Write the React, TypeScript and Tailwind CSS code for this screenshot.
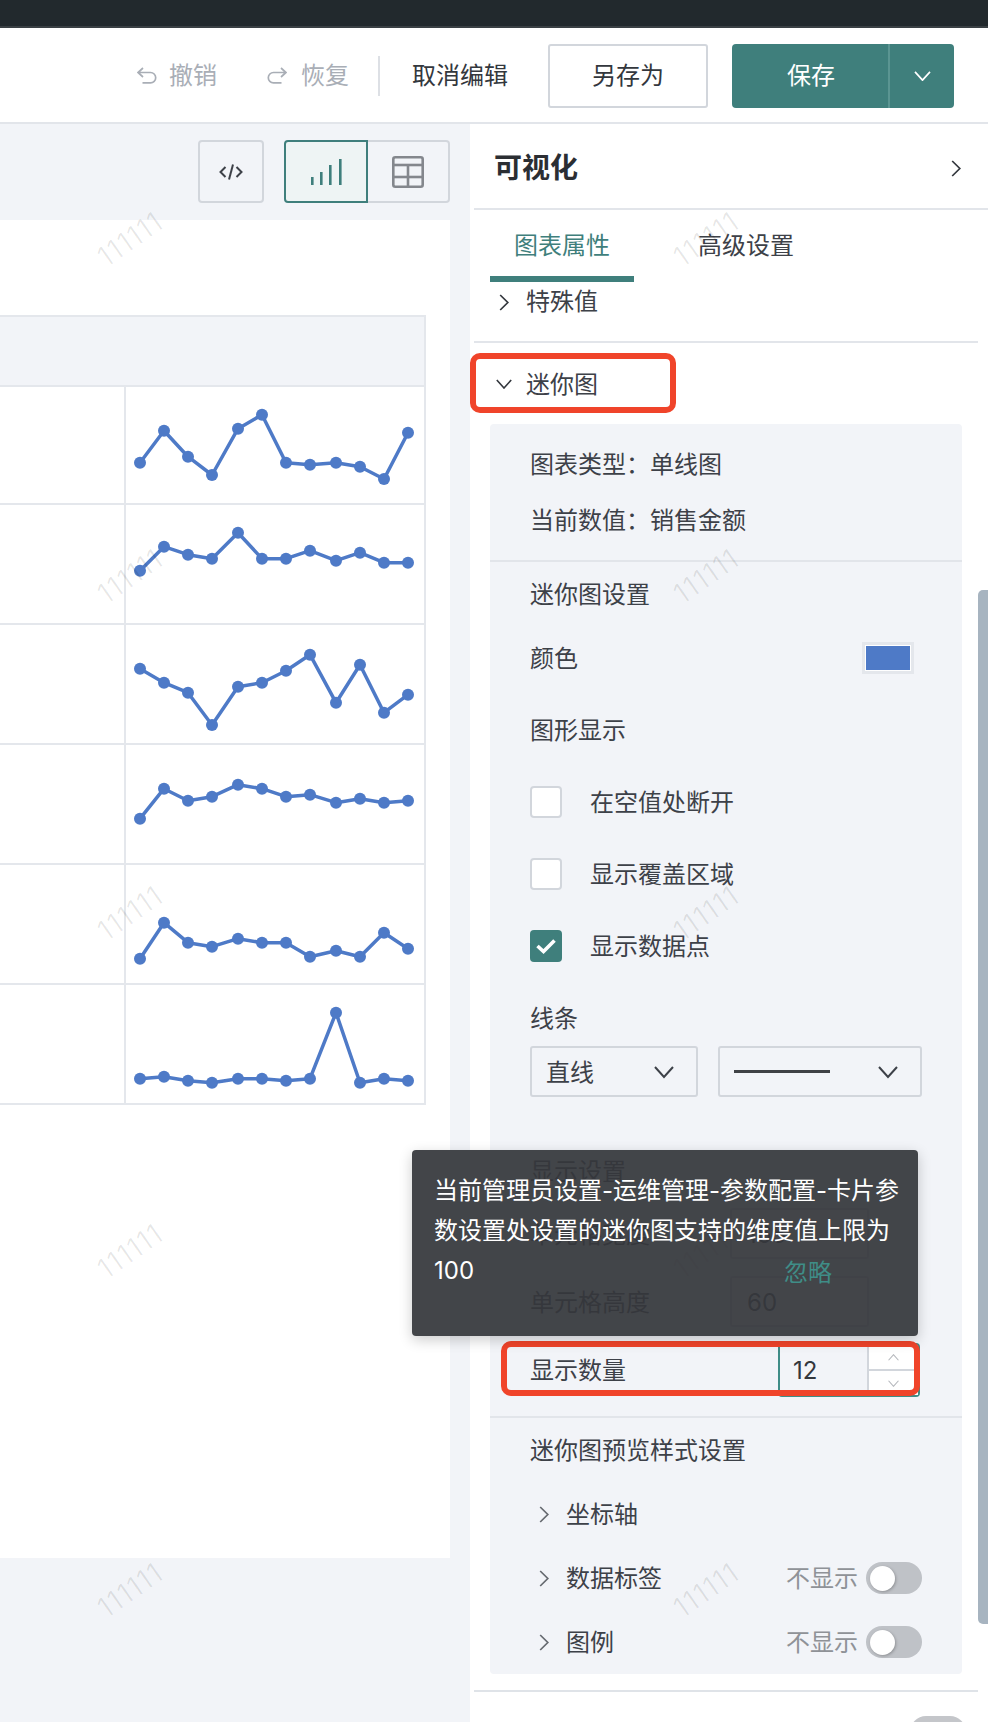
import React from "react";

const XS = [140, 164, 188, 212, 238, 262, 286, 310, 336, 360, 384, 408];
const SPARKS: { top: number; h: number; ys: number[] }[] = [
  { top: 387, h: 116, ys: [462.7, 430.7, 456.7, 475, 428.7, 414.7, 462.7, 464.7, 462.7, 466.7, 479, 432.7] },
  { top: 505, h: 118, ys: [570.7, 546.7, 554.7, 558.7, 532.7, 558.7, 558.7, 550.7, 560.7, 552.7, 562.7, 562.7] },
  { top: 625, h: 118, ys: [668.7, 682.7, 692.7, 725, 686.7, 682.7, 670.7, 654.7, 702.7, 664.7, 712.7, 694.7] },
  { top: 745, h: 118, ys: [818.7, 788.7, 800.7, 796.7, 784.7, 788.7, 796.7, 794.7, 802.7, 798.7, 802.7, 800.7] },
  { top: 865, h: 118, ys: [958.7, 922.7, 942.7, 946.7, 938.7, 942.7, 942.7, 956.7, 950.7, 956.7, 932.7, 948.7] },
  { top: 985, h: 118, ys: [1078.7, 1076.7, 1080.7, 1082.7, 1078.7, 1078.7, 1080.7, 1078.7, 1012.7, 1082.7, 1078.7, 1080.7] },
];

const WATERMARKS = [
  [130, 239], [130, 576], [130, 913], [130, 1251], [130, 1590],
  [706, 239], [706, 576], [706, 913], [706, 1251], [706, 1590],
];

function Right({ className }: { className: string }) {
  return (
    <svg viewBox="0 0 10 17" fill="none" stroke="currentColor" strokeWidth="1.7" className={className}>
      <polyline points="1.2,1 8.8,8.5 1.2,16" />
    </svg>
  );
}

function Down({ className }: { className: string }) {
  return (
    <svg viewBox="0 0 20 12" fill="none" stroke="currentColor" strokeWidth="2" className={className}>
      <polyline points="1,1 10,11 19,1" />
    </svg>
  );
}

function Spark({ top, h, ys }: { top: number; h: number; ys: number[] }) {
  const pts = XS.map((x, i) => [x - 126, ys[i] - top]);
  return (
    <svg width="298" height={h} viewBox={`0 0 298 ${h}`} className="block overflow-visible">
      <polyline points={pts.map((p) => p.join(",")).join(" ")} fill="none" stroke="#4e7ac7" strokeWidth="3.5" strokeLinejoin="round" />
      {pts.map((p, i) => (
        <circle key={i} cx={p[0]} cy={p[1]} r="6" fill="#4e7ac7" />
      ))}
    </svg>
  );
}

function Toggle() {
  return (
    <div className="flex h-[32px] w-[56px] items-center rounded-full bg-[#bfc2c7] pl-[4px]">
      <div className="h-[25px] w-[25px] rounded-full bg-white shadow-[1px_1px_3px_rgba(0,0,0,0.25)]" />
    </div>
  );
}

function Check({ checked, label }: { checked?: boolean; label: string }) {
  return (
    <div className="flex h-[72px] items-center pl-[40px]">
      {checked ? (
        <div className="flex h-[32px] w-[32px] items-center justify-center rounded-[4px] bg-[#3f7f7c]">
          <svg viewBox="0 0 20 16" className="h-[16px] w-[20px]" fill="none" stroke="#fff" strokeWidth="3.6">
            <polyline points="1.5,8 7.5,13.5 18.5,2.5" />
          </svg>
        </div>
      ) : (
        <div className="h-[32px] w-[32px] rounded-[4px] border-2 border-[#d2d6dc] bg-white" />
      )}
      <span className="ml-[28px] mt-[2px]">{label}</span>
    </div>
  );
}

function Input({ value }: { value: string }) {
  return (
    <div className="flex h-[51px] w-[139px] items-center rounded-[3px] border-2 border-[#d2d6dc] bg-white pl-[15px] text-[#3d4148]">
      <span className="mt-[2px]">{value}</span>
    </div>
  );
}

export default function App() {
  return (
    <div className="relative flex h-[1722px] w-[988px] flex-col overflow-hidden bg-white font-['Inter','Noto_Sans_CJK_SC',sans-serif] text-[24px] leading-[32px] text-[#3d4148]">
      {/* top dark bar */}
      <div className="h-[28px] shrink-0 border-b-2 border-[#3a4044] bg-[#22292d]" />

      {/* header */}
      <div className="flex h-[96px] shrink-0 items-start justify-end border-b-2 border-[#e2e5ea] pr-[34px] pt-[16px]">
        <div className="flex h-[64px] items-center text-[#a9aeb6]">
          <svg viewBox="0 0 20 18" className="h-[18px] w-[20px]" fill="none" stroke="currentColor" strokeWidth="1.7">
            <path d="M6 1 L1 5.5 L6 10 M1 5.5 H13.5 a5.2 5.2 0 0 1 0 10.4 H5.5" />
          </svg>
          <span className="ml-[12px]">撤销</span>
          <svg viewBox="0 0 20 18" className="ml-[50px] h-[18px] w-[20px]" fill="none" stroke="currentColor" strokeWidth="1.7">
            <path d="M14 1 L19 5.5 L14 10 M19 5.5 H6.5 a5.2 5.2 0 0 0 0 10.4 H14.5" />
          </svg>
          <span className="ml-[14px]">恢复</span>
          <div className="ml-[29px] h-[40px] w-[2px] bg-[#dde0e5]" />
        </div>
        <div className="ml-[32px] flex h-[64px] items-center text-[#33373d]">取消编辑</div>
        <div className="ml-[40px] flex h-[64px] w-[160px] items-center justify-center rounded-[3px] border-2 border-[#d2d6dc] text-[#33373d]">
          另存为
        </div>
        <div className="ml-[24px] flex h-[64px] w-[222px] overflow-hidden rounded-[4px] bg-[#3f7f7c] text-white">
          <div className="flex w-[158px] items-center justify-center border-r-2 border-[#5b9592] pl-[2px]">保存</div>
          <div className="flex flex-1 items-center justify-center">
            <Down className="h-[10px] w-[17px]" />
          </div>
        </div>
      </div>

      {/* body */}
      <div className="flex min-h-0 flex-1">
        {/* left */}
        <div className="flex w-[470px] shrink-0 flex-col bg-[#f2f4f8]">
          <div className="flex h-[96px] shrink-0 justify-end pr-[20px] pt-[16px]">
            <div className="flex h-[63px] w-[66px] items-center justify-center rounded-[4px] border-2 border-[#d2d6dc]">
              <svg viewBox="0 0 24 16" className="h-[16px] w-[24px]" fill="none" stroke="#3d4148" strokeWidth="2">
                <polyline points="6.5,3 1.5,8 6.5,13" />
                <polyline points="17.5,3 22.5,8 17.5,13" />
                <line x1="14" y1="0.5" x2="10" y2="15.5" />
              </svg>
            </div>
            <div className="ml-[20px] flex h-[63px] w-[84px] items-center justify-center rounded-l-[4px] border-2 border-[#3f7f7c] bg-[#eef4f4]">
              <svg viewBox="0 0 31 26" className="h-[26px] w-[31px]" fill="#3f7f7c">
                <rect x="0" y="18" width="2.6" height="8" />
                <rect x="9" y="13" width="2.6" height="13" />
                <rect x="18" y="6" width="2.6" height="20" />
                <rect x="28" y="0" width="2.6" height="26" />
              </svg>
            </div>
            <div className="flex h-[63px] w-[82px] items-center justify-center rounded-r-[4px] border-y-2 border-r-2 border-[#d2d6dc]">
              <svg viewBox="0 0 32 32" className="h-[32px] w-[32px]" fill="none" stroke="#84878d" strokeWidth="2.6">
                <rect x="1.3" y="1.3" width="29.4" height="29.4" rx="2" />
                <line x1="1" y1="9" x2="31" y2="9" />
                <line x1="1" y1="21" x2="31" y2="21" />
                <line x1="16" y1="9" x2="16" y2="31" />
              </svg>
            </div>
          </div>
          <div className="mr-[20px] h-[1338px] shrink-0 bg-white pt-[95px]">
            <div className="w-[426px] border-t-2 border-r-2 border-[#e4e7ec]">
              <div className="h-[70px] border-b-2 border-[#e4e7ec] bg-[#f2f4f8]" />
              {SPARKS.map((s, i) => (
                <div key={i} className="flex border-b-2 border-[#e4e7ec]">
                  <div className="w-[124px] shrink-0 border-r-2 border-[#e4e7ec] box-content" />
                  <Spark top={s.top} h={s.h} ys={s.ys} />
                </div>
              ))}
            </div>
          </div>
        </div>

        {/* right panel */}
        <div className="relative flex min-w-0 flex-1 flex-col">
          <div className="ml-[4px] flex h-[86px] shrink-0 items-center justify-between border-b-2 border-[#e2e5ea] pl-[20px] pr-[27px] pt-[4px]">
            <span className="text-[28px] font-bold text-[#2b2e33]">可视化</span>
            <Right className="h-[17px] w-[10px] text-[#33373d]" />
          </div>
          <div className="ml-[20px] flex h-[72px] shrink-0 gap-[40px]">
            <div className="flex w-[144px] items-center justify-center border-b-[6px] border-[#3f7f7c] pt-[6px] text-[#3f7f7c]">图表属性</div>
            <div className="flex w-[144px] items-center justify-center border-b-[6px] border-transparent pt-[6px]">高级设置</div>
          </div>
          <div className="flex h-[40px] shrink-0 items-center pl-[29px]">
            <Right className="h-[17px] w-[10px] text-[#33373d]" />
            <span className="ml-[17px]">特殊值</span>
          </div>
          <div className="ml-[4px] mt-[19px] h-[2px] w-[504px] shrink-0 bg-[#e2e5ea]" />
          <div className="flex h-[81px] shrink-0 items-center pl-[26px]">
            <Down className="h-[10px] w-[16px] text-[#33373d]" />
            <span className="ml-[14px] mt-[2px]">迷你图</span>
          </div>

          {/* card */}
          <div className="ml-[20px] w-[472px] shrink-0 rounded-[4px] bg-[#f2f4f8]">
            <div className="pt-[12px]">
              <div className="flex h-[56px] items-center pl-[40px] pt-[2px]">图表类型：单线图</div>
              <div className="flex h-[56px] items-center pl-[40px] pt-[2px]">当前数值：销售金额</div>
            </div>
            <div className="mt-[12px] h-[2px] bg-[#e2e5ea]" />
            <div className="flex h-[64px] items-center pl-[40px] pt-[2px]">迷你图设置</div>
            <div className="flex h-[64px] items-center justify-between pl-[40px] pr-[48px]">
              <span className="mt-[2px]">颜色</span>
              <div className="h-[32px] w-[52px] border-[3px] border-[#e4e7ec] bg-white p-[1px]">
                <div className="h-full w-full bg-[#4e7ac7]" />
              </div>
            </div>
            <div className="mt-[4px] flex h-[72px] items-center pl-[40px] pt-[2px]">图形显示</div>
            <Check label="在空值处断开" />
            <Check label="显示覆盖区域" />
            <Check checked label="显示数据点" />
            <div className="mt-[8px] flex h-[56px] items-center pl-[40px] pt-[2px]">线条</div>
            <div className="flex gap-[20px] pl-[40px]">
              <div className="flex h-[51px] w-[168px] items-center justify-between rounded-[3px] border-2 border-[#d2d6dc] pl-[14px] pr-[22px]">
                <span className="mt-[2px]">直线</span>
                <Down className="h-[14px] w-[20px] text-[#3d4148]" />
              </div>
              <div className="flex h-[51px] w-[204px] items-center justify-between rounded-[3px] border-2 border-[#d2d6dc] pl-[14px] pr-[22px]">
                <div className="h-[3px] w-[96px] bg-[#3f4246]" />
                <Down className="h-[14px] w-[20px] text-[#3d4148]" />
              </div>
            </div>
            <div className="mt-[46px] flex h-[56px] items-center pl-[40px] pt-[2px]">显示设置</div>
            <div className="mt-[9px] flex h-[51px] items-center justify-between pl-[40px] pr-[93px]">
              <span className="mt-[2px]">单元格宽度</span>
              <Input value="165" />
            </div>
            <div className="mt-[17px] flex h-[51px] items-center justify-between pl-[40px] pr-[93px]">
              <span className="mt-[2px]">单元格高度</span>
              <Input value="60" />
            </div>
            <div className="mt-[18px] flex h-[50px] items-center justify-between pl-[40px] pr-[42px]">
              <span className="mt-[2px]">显示数量</span>
              <div className="relative -my-[2px] flex h-[54px] w-[142px] rounded-[4px] border-2 border-[#3f8d87]">
                <div className="flex w-[88px] items-center pl-[13px] pt-[2px] text-[#33373d]">12</div>
                <div className="flex w-[52px] flex-col border-l-2 border-[#d2d6dc] bg-white">
                  <div className="flex flex-1 items-center justify-center border-b-2 border-[#d2d6dc]">
                    <Down className="h-[7px] w-[11px] rotate-180 text-[#b3b6bb]" />
                  </div>
                  <div className="flex flex-1 items-center justify-center">
                    <Down className="h-[7px] w-[11px] text-[#b3b6bb]" />
                  </div>
                </div>
              </div>
            </div>
            <div className="mt-[21px] h-[2px] bg-[#e2e5ea]" />
            <div className="flex h-[64px] items-center pl-[40px] pt-[2px]">迷你图预览样式设置</div>
            <div className="flex h-[64px] items-center pl-[49px]">
              <Right className="h-[17px] w-[10px] text-[#666a70]" />
              <span className="ml-[17px] mt-[2px]">坐标轴</span>
            </div>
            <div className="flex h-[64px] items-center pl-[49px] pr-[40px]">
              <Right className="h-[17px] w-[10px] text-[#666a70]" />
              <span className="ml-[17px] mt-[2px]">数据标签</span>
              <span className="ml-auto mr-[8px] mt-[2px] text-[#8f9297]">不显示</span>
              <Toggle />
            </div>
            <div className="flex h-[64px] items-center pl-[49px] pr-[40px]">
              <Right className="h-[17px] w-[10px] text-[#666a70]" />
              <span className="ml-[17px] mt-[2px]">图例</span>
              <span className="ml-auto mr-[8px] mt-[2px] text-[#8f9297]">不显示</span>
              <Toggle />
            </div>
          </div>

          <div className="ml-[4px] mt-[16px] h-[2px] w-[504px] shrink-0 bg-[#dfe3e8]" />
          <div className="mt-[24px] flex items-start justify-between pl-[60px] pr-[22px]">
            <span className="mt-[4px]">标题</span>
            <div className="h-[32px] w-[56px] rounded-full bg-[#c4c6ca]" />
          </div>

          {/* scrollbar */}
          <div className="absolute left-[508px] top-[466px] h-[1034px] w-[10px] rounded-l-[5px] bg-[#a7b4c0]" />
        </div>
      </div>

      {/* watermarks */}
      {WATERMARKS.map(([x, y], i) => (
        <div
          key={i}
          style={{ left: x - 55, top: y - 16 }}
          className="pointer-events-none absolute z-10 flex h-[32px] w-[110px] -rotate-[35deg] items-center justify-center text-[28px] font-light tracking-[1px] text-black/10"
        >
          111111
        </div>
      ))}

      {/* red highlight boxes */}
      <div className="pointer-events-none absolute left-[470px] top-[353px] z-10 h-[60px] w-[206px] rounded-[10px] border-[6px] border-[#f0442a]" />
      <div className="pointer-events-none absolute left-[501px] top-[1341px] z-10 h-[55px] w-[419px] rounded-[10px] border-[6px] border-[#f0442a]" />

      {/* tooltip */}
      <div className="absolute left-[412px] top-[1150px] z-20 h-[186px] w-[506px] rounded-[4px] bg-[rgba(53,55,59,0.93)] pb-[20px] pl-[22px] pr-[14px] pt-[21px] leading-[40px] text-white shadow-[0_4px_14px_rgba(0,0,0,0.2)]">
        当前管理员设置-运维管理-参数配置-卡片参数设置处设置的迷你图支持的维度值上限为100
        <span className="absolute bottom-[44px] right-[86px] leading-[38px] text-[#3f8d87]">忽略</span>
      </div>
    </div>
  );
}
